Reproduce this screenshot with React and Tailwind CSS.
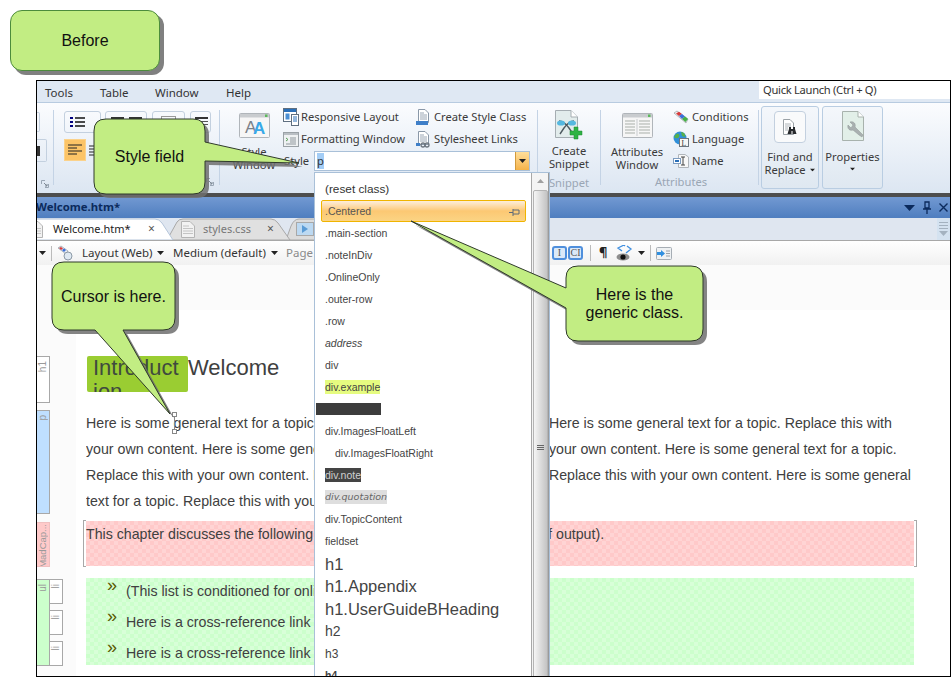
import React from "react";

const UI = "font-['Noto_Sans',sans-serif]";

const SENTENCE = "Here is some general text for a topic. Replace this with your own content. ";

const STYLE_ROWS = [
  { label: "(reset class)", cls: "text-[11.8px] text-[#333]" },
  { label: ".Centered", hot: true },
  { label: ".main-section" },
  { label: ".noteInDiv" },
  { label: ".OnlineOnly" },
  { label: ".outer-row" },
  { label: ".row" },
  { label: "address", cls: "italic" },
  { label: "div" },
  { label: "div.example", mark: "bg-[#e6fc80]" },
  { bar: true },
  { label: "div.ImagesFloatLeft" },
  { label: "div.ImagesFloatRight", cls: "ml-[10px]" },
  { label: "div.note", mark: "bg-[#444444] text-[#d0d0d0]" },
  { label: "div.quotation", mark: "bg-[#dedede] italic font-['DejaVu_Sans',sans-serif] text-[9.5px] text-[#666]" },
  { label: "div.TopicContent" },
  { label: "fieldset" },
  { label: "h1", cls: "text-[16.5px]", h: "h-[22.5px]" },
  { label: "h1.Appendix", cls: "text-[16.5px]", h: "h-[22.5px]" },
  { label: "h1.UserGuideBHeading", cls: "text-[16.5px]", h: "h-[22.5px]" },
  { label: "h2", cls: "text-[14px]" },
  { label: "h3", cls: "text-[12px]" },
  { label: "h4", cls: "font-bold" },
];

function Launcher() {
  return (
    <svg width="8" height="8" viewBox="0 0 8 8" className="shrink-0">
      <path d="M0.5 4V0.5H4M7.5 4V7.5H4" fill="none" stroke="#9aa6b4" />
      <path d="M3 3L6 6M6 4V6H4" fill="none" stroke="#7d8894" />
    </svg>
  );
}

function DownArrow({ className = "" }) {
  return (
    <svg width="7" height="4" viewBox="0 0 7 4" className={`shrink-0 ${className}`}>
      <path d="M0 0H7L3.5 4Z" fill="#222" />
    </svg>
  );
}

function WindowIcon({ children }) {
  return (
    <svg width="31" height="25" viewBox="0 0 31 25">
      <rect x="0.5" y="0.5" width="30" height="24" rx="1" fill="#f6f6f6" stroke="#b0b5ba" />
      <rect x="1" y="1" width="29" height="3.5" fill="#c9cccf" />
      <rect x="26" y="1.5" width="2.5" height="2.5" fill="#5cb85c" />
      {children}
    </svg>
  );
}

function StyleWindowIcon() {
  return (
    <WindowIcon>
      <text x="6" y="20" fontSize="17" fontFamily="Liberation Sans" fill="#7a8088">A</text>
      <text x="14" y="21" fontSize="17" fontWeight="bold" fontFamily="Liberation Sans" fill="#39a9e8">A</text>
    </WindowIcon>
  );
}

function AttributesWindowIcon() {
  return (
    <WindowIcon>
      <path d="M3 8H13M3 11H13M3 14H13M3 17H13M3 20H13M17 8H28M17 11H28M17 14H28M17 17H28M17 20H28" stroke="#a9afa9" />
      <path d="M15 6V23" stroke="#c9cccf" />
    </WindowIcon>
  );
}

function ResponsiveIcon() {
  return (
    <svg width="16" height="18" viewBox="0 0 16 18">
      <rect x="0.5" y="0.5" width="13" height="13" fill="#fff" stroke="#5f6f80" />
      <rect x="1" y="1" width="12" height="3" fill="#2a6fb8" />
      <rect x="2.5" y="5.5" width="4" height="6" fill="#4b8fd4" />
      <rect x="8.5" y="6.5" width="7" height="11" fill="#fff" stroke="#5f6f80" />
      <path d="M10 9H14M10 11H14M10 13H14" stroke="#2a6fb8" />
    </svg>
  );
}

function FormattingIcon() {
  return (
    <svg width="16" height="15" viewBox="0 0 16 15">
      <rect x="0.5" y="0.5" width="15" height="14" fill="#eef1f2" stroke="#9aa1a6" />
      <rect x="1" y="1" width="14" height="2" fill="#b9bfc4" />
      <path d="M3 6L5 7.5L3 9" fill="none" stroke="#5aa05a" />
      <path d="M7 6H13M7 8H13M7 10H13M3 12H13" stroke="#8f979d" />
    </svg>
  );
}

function SheetIcon({ link }) {
  return (
    <svg width="14" height="17" viewBox="0 0 14 17">
      <path d="M2.5 0.5H9L12.5 4V13.5H2.5Z" fill="#fff" stroke="#8a98a8" />
      <path d="M4 4H8M4 6H11M4 8H11M4 10H11" stroke="#9aa6b4" />
      {link ? (
        <g fill="none" stroke="#6d7680" strokeWidth="1.3">
          <circle cx="7" cy="14" r="2" />
          <circle cx="11" cy="14" r="2" />
          <rect x="0" y="12" width="4" height="3" fill="#3f7fc8" stroke="none" />
        </g>
      ) : (
        <rect x="0" y="12" width="12" height="4" fill="#3f7fc8" />
      )}
    </svg>
  );
}

function SnippetIcon() {
  return (
    <svg width="28" height="31" viewBox="0 0 28 31">
      <path d="M0.5 0.5H16L22.5 7V27.5H0.5Z" fill="#e2ecec" stroke="#a5adb2" />
      <path d="M16 0.5V7H22.5" fill="#fff" stroke="#a5adb2" />
      <path d="M4 11C8 11 11 14 14 18L18 24M19 11C15 11 12 14 9 18L5 24" fill="none" stroke="#4e5a60" strokeWidth="1.4" />
      <ellipse cx="6" cy="13" rx="4" ry="2.6" fill="#55b8e0" />
      <ellipse cx="17" cy="13" rx="4" ry="2.6" fill="#55b8e0" />
      <path d="M19 17H23V21H27V25H23V29H19V25H15V21H19Z" fill="#2fb344" stroke="#1f8a32" strokeWidth="0.5" />
    </svg>
  );
}

function ConditionsIcon() {
  return (
    <svg width="17" height="15" viewBox="0 0 17 15">
      <path d="M1 3L4 1L15 9L13 13Z" fill="#eee" stroke="#8a8f96" strokeWidth="0.6" />
      <path d="M3 3.5L6 1.8L9 4L6 6Z" fill="#d83a3a" />
      <path d="M6 6L9 4L12 6.5L9 9Z" fill="#3d6fd8" />
      <path d="M9 9L12 6.5L15 9L12.5 12Z" fill="#45b045" />
    </svg>
  );
}

function LanguageIcon() {
  return (
    <svg width="16" height="16" viewBox="0 0 16 16">
      <circle cx="7" cy="7" r="6.5" fill="#2f8fd8" />
      <path d="M3 3C6 2 7 4 6 6C4 8 2 7 1 6ZM8 1C11 1 13 4 12 6L9 5Z" fill="#55b04a" />
      <rect x="6.5" y="7.5" width="9" height="8" fill="#f5f7f7" stroke="#6c7680" />
      <text x="8.5" y="14.5" fontSize="7.5" fontFamily="Liberation Serif" fill="#333">L</text>
    </svg>
  );
}

function NameIcon() {
  return (
    <svg width="16" height="16" viewBox="0 0 16 16">
      <path d="M5.5 1.5H12L15.5 4V14.5H5.5Z" fill="#f8f8f8" stroke="#b0b5ba" />
      <rect x="0.5" y="5.5" width="7" height="5" fill="#fff" stroke="#7d9cc0" />
      <rect x="2" y="7" width="4" height="2" fill="#2a6fb8" />
      <path d="M8 4H12M10 4V12M8 12H12" fill="none" stroke="#444" />
    </svg>
  );
}

function FindIcon() {
  return (
    <svg width="14" height="16" viewBox="0 0 14 16">
      <path d="M0.5 0.5H7L10.5 4V15.5H0.5Z" fill="#fff" stroke="#9aa1a6" />
      <path d="M2 5H8M2 7H8M2 9H5M2 11H5" stroke="#aeb4b8" />
      <path d="M6 8H8V10H10V8H12V10L13.5 15H9.5V12H8.5V15H4.5L6 10Z" fill="#26292c" />
    </svg>
  );
}

function PropertiesIcon() {
  return (
    <svg width="22" height="30" viewBox="0 0 22 30">
      <path d="M0.5 0.5H16L21.5 6V29.5H0.5Z" fill="#e2efe8" stroke="#a8b2ad" />
      <path d="M16 0.5V6H21.5" fill="#fff" stroke="#a8b2ad" />
      <path d="M17 24L20 26L21 24L13 16C14 13 12 10 8 11L11 14L9 17L6 14C5 18 8 20 11 19Z" fill="#a9b0b0" stroke="#8c9494" strokeWidth="0.5" />
    </svg>
  );
}

function RibbonItem({ icon, label, className = "" }) {
  return (
    <div className={`flex h-[22px] items-center ${className}`}>
      <div className="flex w-[18px] shrink-0 items-center">{icon}</div>
      <span className="whitespace-nowrap">{label}</span>
    </div>
  );
}

function Sep() {
  return <div className="mt-[7px] h-[75px] w-px shrink-0 bg-[#c4d3e5]" />;
}

function GroupLabel({ children, launcher }) {
  return (
    <div className="mt-auto flex h-[18px] items-center justify-center whitespace-nowrap pb-[4px] text-[#9aa6b4]">
      {children}
      {launcher}
    </div>
  );
}

function Ribbon() {
  return (
    <div className={`flex h-[90px] bg-gradient-to-b from-[#fbfcfe] to-[#dce6f2] text-[11.2px] text-[#3a3a3a] ${UI}`}>
      {/* clipped group on the left */}
      <div className="flex w-[16px] shrink-0 flex-col pt-[9px]">
        <div className="h-[20px] w-[3px] rounded-r-[2px] border border-l-0 border-[#c3d0df]" />
        <div className="mt-[7px] flex h-[23px] w-[10px] items-center rounded-r-[2px] border border-l-0 border-[#c3d0df]">
          <div className="h-[10px] w-[3px] bg-[#333]" />
        </div>
        <div className="ml-[4px] mt-[18px]"><Launcher /></div>
      </div>
      <Sep />

      {/* paragraph group */}
      <div className="flex w-[165px] shrink-0 flex-col pt-[8px] pl-[10px]">
        <div className="flex h-[22px] gap-[4px]">
          <div className="flex w-[37px] items-center rounded-[3px] border border-[#c3d0df] pl-[5px]">
            <svg width="15" height="13" viewBox="0 0 15 13">
              <path d="M0 1H3V3H0ZM0 5H3V7H0ZM0 9H3V11H0Z" fill="#00007f" />
              <path d="M5 2H15M5 6H15M5 10H15" stroke="#111" strokeWidth="1.3" />
            </svg>
          </div>
          <div className="flex w-[42px] items-start justify-center gap-[5px] rounded-[3px] border border-[#c3d0df] pt-[5px]">
            <div className="h-[2px] w-[13px] bg-[#333]" />
            <div className="h-[2px] w-[13px] bg-[#333]" />
          </div>
          <div className="ml-px flex w-[33px] justify-center rounded-[3px] border border-[#c3d0df] pt-[4px]">
            <div className="h-[8px] w-[15px] border border-[#999]" />
          </div>
          <div className="ml-px w-[21px] rounded-[3px] border border-[#c3d0df] pl-[4px] pt-[5px]">
            <div className="h-[2px] w-[13px] bg-[#333]" />
            <div className="mt-[2px] h-px w-[13px] bg-[#555]" />
            <div className="mt-[2px] h-px w-[13px] bg-[#555]" />
          </div>
        </div>
        <div className="mt-[6px] flex h-[22px] w-[60px] items-center">
          <div className="flex h-[22px] w-[22px] items-center justify-center border border-[#fbd28b] bg-[#fcc467]">
            <svg width="14" height="12" viewBox="0 0 14 12">
              <path d="M0 1H14M0 4H9M0 7H14M0 10H9" stroke="#222" />
            </svg>
          </div>
          <svg width="6" height="11" viewBox="0 0 6 11" className="ml-[3px]">
            <path d="M0 1H6M0 4H6M0 7H6M0 10H6" stroke="#222" />
          </svg>
        </div>
        <GroupLabel launcher={<div className="ml-auto mr-[5px]"><Launcher /></div>} />
      </div>
      <Sep />

      {/* style group */}
      <div className="flex w-[317px] shrink-0 pt-[3px]">
        <div className="flex w-[64px] shrink-0 flex-col items-center pl-[4px] pt-[7px] leading-[13px]">
          <StyleWindowIcon />
          <div className="mt-[7px] text-center">Style<br />Window</div>
        </div>
        <div className="flex flex-col">
          <div className="flex">
            <RibbonItem className="-ml-px w-[133px]" icon={<ResponsiveIcon />} label="Responsive Layout" />
            <RibbonItem icon={<SheetIcon />} label="Create Style Class" />
          </div>
          <div className="flex">
            <RibbonItem className="-ml-px w-[133px]" icon={<FormattingIcon />} label="Formatting Window" />
            <RibbonItem icon={<SheetIcon link />} label="Stylesheet Links" />
          </div>
          <div className="flex h-[22px] items-center">
            <span className="w-[30px]">Style</span>
            <div className="flex h-[20px] w-[216px] items-stretch border border-[#a9c0d8] bg-white">
              <span className="ml-[2px] mt-[1px] h-[16px] w-[7px] bg-[#a3cdf6] text-center leading-[16px] text-[#333]">p</span>
              <div className="ml-auto flex w-[14px] items-center justify-center border-l border-[#d29a3c] bg-gradient-to-b from-[#ffdf9a] to-[#f5b347]">
                <DownArrow />
              </div>
            </div>
          </div>
        </div>
      </div>
      <Sep />

      {/* snippet group */}
      <div className="flex w-[62px] shrink-0 flex-col items-center pt-[7px] leading-[13px]">
        <SnippetIcon />
        <div className="mt-[3px] text-center">Create<br />Snippet</div>
        <GroupLabel>Snippet</GroupLabel>
      </div>
      <Sep />

      {/* attributes group */}
      <div className="flex w-[157px] shrink-0 flex-col">
        <div className="flex pt-[3px]">
          <div className="flex w-[72px] shrink-0 flex-col items-center pt-[7px] leading-[13px]">
            <AttributesWindowIcon />
            <div className="mt-[7px] text-center">Attributes<br />Window</div>
          </div>
          <div>
            <RibbonItem className="[&>div]:w-[19px]" icon={<ConditionsIcon />} label="Conditions" />
            <RibbonItem className="[&>div]:w-[19px]" icon={<LanguageIcon />} label="Language" />
            <RibbonItem className="[&>div]:w-[19px]" icon={<NameIcon />} label="Name" />
          </div>
        </div>
        <GroupLabel><span className="ml-[3px]">Attributes</span></GroupLabel>
      </div>
      <Sep />

      {/* big buttons */}
      <div className="flex gap-[3px] pl-[2px] pt-[3px] leading-[13px]">
        <div className="flex h-[83px] w-[58px] flex-col items-center rounded-[3px] border border-[#b9cde2] bg-gradient-to-b from-[#f4f7fb] to-[#dfe8f1] pt-[4px]">
          <div className="flex h-[32px] w-[32px] items-center justify-center rounded-[4px] border border-[#c3d0df] bg-[#f9fafb]">
            <FindIcon />
          </div>
          <div className="mt-[7px] whitespace-nowrap text-center">
            Find and<br />
            <span className="inline-flex items-center gap-[3px]">Replace <DownArrow className="scale-75" /></span>
          </div>
        </div>
        <div className="flex h-[83px] w-[61px] flex-col items-center rounded-[3px] border border-[#b9cde2] bg-gradient-to-b from-[#f4f7fb] to-[#dfe8f1] pt-[4px]">
          <PropertiesIcon />
          <div className="mt-[9px] text-center">Properties</div>
          <DownArrow className="mt-[4px] scale-75" />
        </div>
      </div>
    </div>
  );
}

function TabShape({ d, fill, stroke }) {
  return (
    <svg className="absolute inset-0 h-full w-full" viewBox="0 0 913 22">
      <path d={d} fill={fill} stroke={stroke} />
    </svg>
  );
}

function DocIcon({ className = "" }) {
  return (
    <svg width="14" height="17" viewBox="0 0 14 17" className={`shrink-0 ${className}`}>
      <path d="M0.5 0.5H9L13.5 5V16.5H0.5Z" fill="#f2f2f2" stroke="#b4b4b4" />
      <path d="M2 5H8M2 7.5H12M2 10H12M2 12.5H12" stroke="#c4c4c4" />
    </svg>
  );
}

function Tabs() {
  return (
    <div className={`relative h-[22px] overflow-hidden bg-[#dfe6f0] text-[11px] ${UI}`}>
      <TabShape d="M249 22L254 8Q257 1 262 1H290V22Z" fill="#dcdcdc" stroke="#a8a8a8" />
      <TabShape d="M130 22L140 4Q142 1 146 1H234Q238 1 241 5L253 22Z" fill="#e0e0e0" stroke="#a8a8a8" />
      <TabShape d="M-2 1H118Q122 1 125 5L136 22H-2Z" fill="#ffffff" stroke="#b6c6da" />
      <div className="relative flex h-full items-center">
        <DocIcon className="-ml-[8px]" />
        <span className="ml-[10px] w-[95px] text-[#222]">Welcome.htm*</span>
        <span className="w-[20px] text-[12px] text-[#555]">×</span>
        <DocIcon className="ml-[13px]" />
        <span className="ml-[8px] w-[64px] text-[#777]">styles.css</span>
        <span className="w-[7px] text-[12px] text-[#555]">×</span>
        <div className="ml-[22px] flex h-[14px] w-[18px] items-center justify-center border border-[#a8a8a8] bg-[#bcd9f2]">
          <svg width="6" height="8" viewBox="0 0 6 8"><path d="M0 0L6 4L0 8Z" fill="#5a9bd5" /></svg>
        </div>
        <div className="ml-auto flex h-[22px] w-[13px] flex-col items-center justify-center gap-[2px] bg-[#d4e2f0]">
          <div className="h-px w-[9px] bg-[#a4b2c0]" />
          <div className="h-px w-[9px] bg-[#a4b2c0]" />
          <div className="h-px w-[9px] bg-[#a4b2c0]" />
          <svg width="9" height="5" viewBox="0 0 9 5"><path d="M0 0H9L4.5 5Z" fill="#a4b2c0" /></svg>
        </div>
      </div>
    </div>
  );
}

function BlueToggle({ children }) {
  return (
    <div className="flex h-[14px] w-[15px] items-center justify-center rounded-[3px] border-2 border-[#4f8fdc] bg-[#dbe9f8] font-['Liberation_Serif',serif] text-[10px] leading-none text-[#555]">
      {children}
    </div>
  );
}

function Toolbar() {
  return (
    <div className={`flex h-[25px] items-center border-t border-[#a8a8a8] bg-gradient-to-b from-white to-[#f1f1f1] text-[11.5px] text-[#333] ${UI}`}>
      <DownArrow className="ml-[2px]" />
      <div className="ml-[5px] h-[15px] w-px bg-[#bbb]" />
      <svg width="17" height="16" viewBox="0 0 17 16" className="ml-[5px]">
        <path d="M1 3L4 1L11 6L9 9Z" fill="#e8eef4" stroke="#7f8a96" strokeWidth="0.6" />
        <path d="M2 3L4 2L6 3.5L4 5Z" fill="#d83a3a" />
        <path d="M5 5L7 3.5L9 5L7 7Z" fill="#3d6fd8" />
        <circle cx="11" cy="11" r="4" fill="#dfe9f2" stroke="#8c99a6" />
      </svg>
      <span className="ml-[8px] w-[75px] whitespace-nowrap">Layout (Web)</span>
      <DownArrow />
      <span className="ml-[9px] w-[98px] whitespace-nowrap">Medium (default)</span>
      <DownArrow />
      <span className="ml-[8px] text-[#8a8a8a]">Page</span>
      <div className="ml-[239px]"><BlueToggle>I</BlueToggle></div>
      <div className="ml-[1px]"><BlueToggle>CI</BlueToggle></div>
      <div className="ml-[7px] h-[16px] w-px bg-[#bbb]" />
      <span className="ml-[8px] w-[15px] text-[13px] font-bold text-[#222]">¶</span>
      <svg width="17" height="17" viewBox="0 0 17 17" className="ml-[2px]">
        <path d="M6 6L2 3L8 0L9 1M11 1L15 4L10 8" fill="none" stroke="#3f8fe0" strokeWidth="1.3" />
        <ellipse cx="7" cy="12" rx="6.5" ry="3.6" fill="#8d8d8d" />
        <circle cx="7" cy="12" r="2.6" fill="#111" />
      </svg>
      <DownArrow className="ml-[5px]" />
      <div className="ml-[5px] h-[16px] w-px bg-[#bbb]" />
      <svg width="16" height="13" viewBox="0 0 16 13" className="ml-[5px]">
        <rect x="0.5" y="0.5" width="15" height="12" rx="1" fill="#eef1f3" stroke="#a6adb4" />
        <path d="M1 5H5V3L9 6.5L5 10V8H1Z" fill="#2f8fe0" />
        <path d="M10 4H14M10 6.5H14M10 9H14" stroke="#9aa1a8" />
      </svg>
    </div>
  );
}

function GutterTag({ className = "", textClass = "mt-[4px] text-[10px]", children }) {
  return (
    <div className={`flex justify-center overflow-hidden border border-l-0 border-[#a8a8a8] ${className}`}>
      <span className={`rotate-180 self-start whitespace-nowrap leading-[12px] text-[#9a9a9a] [writing-mode:vertical-rl] ${textClass}`}>{children}</span>
    </div>
  );
}

function Document() {
  const items = [
    "(This list is conditioned for online output)",
    "Here is a cross-reference link",
    "Here is a cross-reference link",
  ];
  return (
    <div className="min-h-0 flex-1 bg-white font-['Liberation_Sans',sans-serif] text-[14.2px] leading-[26px] text-[#404040]">
      <div className="h-[45px] bg-[#fbfbfb]" />
      <div className="flex">
        <div className="h-[400px] w-[39px] shrink-0 bg-[#fbfbfb] pt-[46px]">
          <GutterTag className="h-[47px] w-[13px] bg-white">h1</GutterTag>
          <GutterTag className="mt-[7px] h-[104px] w-[13px] bg-[#bfdfff]">p</GutterTag>
          <GutterTag className="mt-[8px] h-[45px] w-[13px] border-[#f0c0c0] bg-[#ffcaca]" textClass="mt-[1px] text-[9.5px]">MadCap...</GutterTag>
          <div className="mt-[12px] flex">
            <GutterTag className="h-[87px] w-[13px] bg-[#ccffcc]">ul</GutterTag>
            <div className="flex w-[13px] flex-col gap-[6px]">
              <GutterTag className="h-[25px] border-l bg-white">li</GutterTag>
              <GutterTag className="h-[25px] border-l bg-white">li</GutterTag>
              <GutterTag className="h-[25px] border-l bg-white">li</GutterTag>
            </div>
          </div>
        </div>

        <div className="ml-[10px] w-[829px] pt-[46px]">
          <div className="flex h-[36px] items-start">
            <div className="ml-px h-[36px] w-[101px] overflow-hidden break-all rounded-[2px] bg-[#9acd32] px-[6px] text-[22px] leading-[24px] text-[#3f4a3f]">
              Introduction
            </div>
            <span className="text-[22px] leading-[24px]">Welcome</span>
          </div>
          <p className="mt-[18px] h-[104px] overflow-hidden">
            {SENTENCE.repeat(6)}
          </p>
          <div className="relative mr-px mt-[7px] h-[45px] bg-[repeating-conic-gradient(#ffc9c9_0_25%,#ffd4d4_0_50%)] bg-[length:8px_8px]">
            This chapter discusses the following topics (that are for the online forms of output).
            <div className="absolute -left-[3px] -top-px h-[47px] w-[3px] border-y border-l border-[#a8a8a8]" />
            <div className="absolute -right-[3px] -top-px h-[47px] w-[3px] border-y border-r border-[#a8a8a8]" />
          </div>
          <ul className="mr-px mt-[12px] flex h-[87px] flex-col gap-[5px] bg-[repeating-conic-gradient(#ccffcc_0_25%,#d8ffd8_0_50%)] bg-[length:8px_8px]">
            {items.map((text, i) => (
              <li key={i} className="flex h-[26px]">
                <span className="ml-[21px] w-[19px] -translate-y-[6px] text-[18px] text-[#5a5a00]">»</span>
                {text}
              </li>
            ))}
          </ul>
        </div>
      </div>
    </div>
  );
}

function StyleDropdown() {
  return (
    <div className="absolute left-[277px] top-[91px] flex h-[510px] w-[236px] border-x border-t border-[#a9c0d8] bg-white font-['Liberation_Sans',sans-serif] text-[10.5px] text-[#444]">
      <div className="w-[217px] shrink-0 border-r border-[#a8a8a8] pt-[5px]">
        {STYLE_ROWS.map((row, i) => {
          if (row.bar) {
            return (
              <div key={i} className="flex h-[22px] items-center pl-px">
                <div className="h-[12px] w-[65px] bg-[#3c3c3c]" />
              </div>
            );
          }
          if (row.hot) {
            return (
              <div key={i} className="mx-[6px] flex h-[22px] w-[205px] items-center rounded-[2px] border border-[#f0b400] bg-gradient-to-b from-[#fdeeda] via-[#fcc873] to-[#fbd484] pl-[3px] pr-[5px] pt-[2px] text-[#555]">
                {row.label}
                <svg width="11" height="7" viewBox="0 0 11 7" className="ml-auto">
                  <path d="M0 3.5H4M4 0V7M4 1H10V5H4" fill="none" stroke="#5e6a78" />
                </svg>
              </div>
            );
          }
          return (
            <div key={i} className={`flex items-center overflow-hidden whitespace-nowrap pl-[10px] ${row.mark ? "" : "pt-[2px]"} ${row.h || "h-[22px]"} ${row.cls || ""}`}>
              {row.mark ? <span className={`leading-[14px] ${row.mark}`}>{row.label}</span> : row.label}
            </div>
          );
        })}
      </div>
      <div className="flex w-[16px] shrink-0 flex-col items-center bg-[#f4f4f4]">
        <svg width="7" height="4" viewBox="0 0 7 4" className="mt-[6px] shrink-0"><path d="M0 4H7L3.5 0Z" fill="#a0a0a0" /></svg>
        <div className="mt-[7px] flex h-[515px] w-[15px] shrink-0 items-center justify-center rounded-[2px] border border-[#b4b4b4] bg-gradient-to-r from-[#f5f5f5] to-[#c4c4c4]">
          <div className="flex flex-col gap-px">
            <div className="h-px w-[7px] bg-[#666]" />
            <div className="h-px w-[7px] bg-[#666]" />
            <div className="h-px w-[7px] bg-[#666]" />
          </div>
        </div>
      </div>
      <div className="w-[1px] bg-[#9a9a9a]" />
    </div>
  );
}

function Callout({ d, textClass, children }) {
  return (
    <>
      <svg className="pointer-events-none absolute left-0 top-0 h-[677px] w-[951px]" viewBox="0 0 951 677">
        <path d={d} transform="translate(4 4)" fill="#6f6f6f" opacity="0.85" />
        <path d={d} fill="#c2ed83" stroke="#2f3a2a" strokeWidth="1" />
      </svg>
      <div className={`absolute whitespace-nowrap text-center text-[16px] leading-[18px] text-[#111] ${textClass}`}>{children}</div>
    </>
  );
}

export default function App() {
  return (
    <div className="relative h-[677px] w-[951px] overflow-hidden bg-white font-['Liberation_Sans',sans-serif]">
      <div className="ml-[10px] mt-[10px] flex h-[61px] w-[150px] items-center justify-center rounded-[12px] border border-[#4c8c3c] bg-[#c2ed83] text-[16px] text-[#111] shadow-[4px_4px_0_#808080]">
        Before
      </div>

      <div className="relative ml-[36px] mt-[9px] flex h-[597px] w-[915px] flex-col overflow-hidden border border-black">
        <div className={`flex h-[22px] shrink-0 border-b border-[#b8cbe0] bg-[#dfe8f3] text-[11.5px] text-[#333] ${UI}`}>
          <span className="ml-[8px] mt-[3px] w-[55px]">Tools</span>
          <span className="mt-[3px] w-[55px]">Table</span>
          <span className="mt-[3px] w-[71px]">Window</span>
          <span className="mt-[3px]">Help</span>
          <div className="ml-auto h-[18px] w-[191px] bg-white pl-[4px] text-[11.2px] leading-[18px] tracking-[-0.3px]">Quick Launch (Ctrl + Q)</div>
        </div>
        <Ribbon />
        <div className="h-[4px] shrink-0 bg-[#4d4d4d]" />
        <div className={`flex h-[21px] shrink-0 items-center bg-gradient-to-b from-[#7299d2] to-[#4f7ebf] pr-[2px] text-[11.3px] font-bold text-[#0b2a5c] ${UI}`}>
          <span className="-ml-px">Welcome.htm*</span>
          <svg width="11" height="6" viewBox="0 0 11 6" className="ml-auto"><path d="M0 0H11L5.5 6Z" fill="#0b2a5c" /></svg>
          <svg width="8" height="13" viewBox="0 0 8 13" className="ml-[8px]"><path d="M2 1H6V7H2ZM0 8H8M4 8V13" fill="none" stroke="#0b2a5c" strokeWidth="1.3" /></svg>
          <svg width="9" height="9" viewBox="0 0 9 9" className="ml-[8px]"><path d="M0.5 0.5L8.5 8.5M8.5 0.5L0.5 8.5" stroke="#0b2a5c" strokeWidth="1.4" /></svg>
        </div>
        <Tabs />
        <Toolbar />
        <Document />
        <StyleDropdown />
      </div>

      {/* caret handles in the first paragraph */}
      <div className="absolute left-[172px] top-[412px] h-[5px] w-[5px] border border-[#888] bg-white" />
      <div className="absolute left-[174px] top-[417px] h-[13px] w-px bg-[#888]" />
      <div className="absolute left-[172px] top-[429px] h-[5px] w-[5px] border border-[#888] bg-white" />

      <Callout
        d="M106 119H193Q205 119 205 131V142L299 163L205 161V182Q205 194 193 194H106Q94 194 94 182V131Q94 119 106 119Z"
        textClass="left-[94px] top-[148px] w-[111px]"
      >
        Style field
      </Callout>
      <Callout
        d="M64 262H163Q175 262 175 274V318Q175 330 163 330H123L170 414L95 330H64Q52 330 52 318V274Q52 262 64 262Z"
        textClass="left-[52px] top-[288px] w-[123px]"
      >
        Cursor is here.
      </Callout>
      <Callout
        d="M578 266H691Q703 266 703 278V329Q703 341 691 341H578Q566 341 566 329V308L411 221L566 288V278Q566 266 578 266Z"
        textClass="left-[566px] top-[286px] w-[137px]"
      >
        Here is the<br />generic class.
      </Callout>
    </div>
  );
}
